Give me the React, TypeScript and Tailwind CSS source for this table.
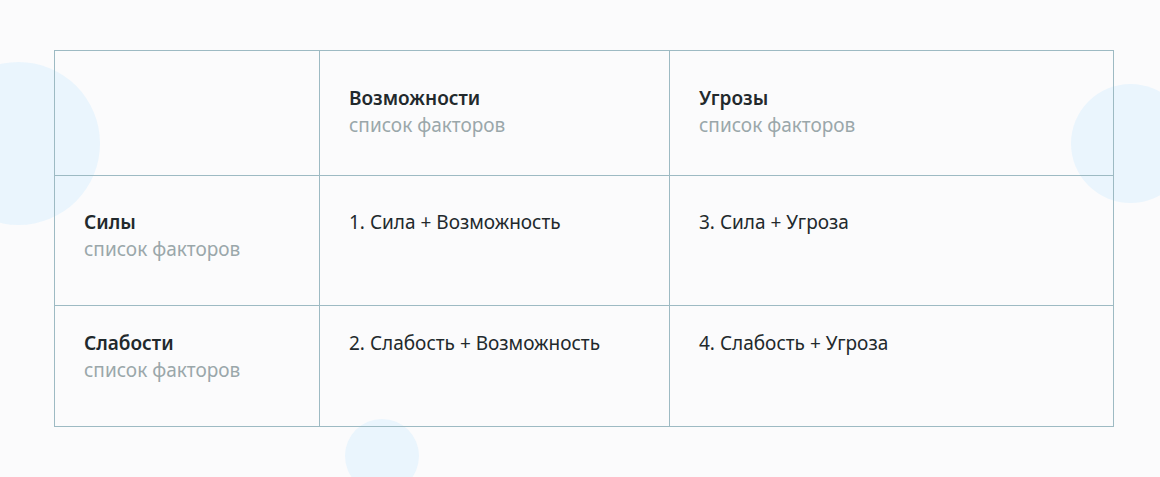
import React from "react";

const font = { fontFamily: '"Noto Sans", "Open Sans", sans-serif' };

function HeadCell({ title, className }: { title: string; className: string }) {
  return (
    <div className={className}>
      <div className="text-[19px] leading-[27px] font-semibold text-[#22292c]">{title}</div>
      <div className="text-[19px] leading-[27px] text-[#9aa7aa]">список факторов</div>
    </div>
  );
}

export default function App() {
  return (
    <div
      className="relative w-[1160px] h-[477px] overflow-hidden bg-[#fbfbfc] pt-[50px] pl-[54px]"
      style={font}
    >
      <div className="absolute left-[-63px] top-[62px] w-[163px] h-[163px] rounded-full bg-[#eaf5fd]" />
      <div className="absolute left-[1071px] top-[84px] w-[119px] h-[119px] rounded-full bg-[#eaf5fd]" />
      <div className="absolute left-[345px] top-[419px] w-[74px] h-[74px] rounded-full bg-[#eaf5fd]" />

      <div className="relative w-[1060px] border border-[#9dbac3] grid grid-cols-[265px_350px_443px] grid-rows-[125px_130px_120px]">
        <div className="border-r border-b border-[#9dbac3]" />
        <HeadCell title="Возможности" className="border-r border-b border-[#9dbac3] px-[29px] pt-[34px]" />
        <HeadCell title="Угрозы" className="border-b border-[#9dbac3] px-[29px] pt-[34px]" />

        <HeadCell title="Силы" className="border-r border-b border-[#9dbac3] px-[29px] pt-[33px]" />
        <div className="border-r border-b border-[#9dbac3] px-[29px] pt-[33px] text-[19px] leading-[27px] text-[#22292c]">
          1. Сила + Возможность
        </div>
        <div className="border-b border-[#9dbac3] px-[29px] pt-[33px] text-[19px] leading-[27px] text-[#22292c]">
          3. Сила + Угроза
        </div>

        <HeadCell title="Слабости" className="border-r border-[#9dbac3] px-[29px] pt-[24px]" />
        <div className="border-r border-[#9dbac3] px-[29px] pt-[24px] text-[19px] leading-[27px] text-[#22292c]">
          2. Слабость + Возможность
        </div>
        <div className="px-[29px] pt-[24px] text-[19px] leading-[27px] text-[#22292c]">
          4. Слабость + Угроза
        </div>
      </div>
    </div>
  );
}
